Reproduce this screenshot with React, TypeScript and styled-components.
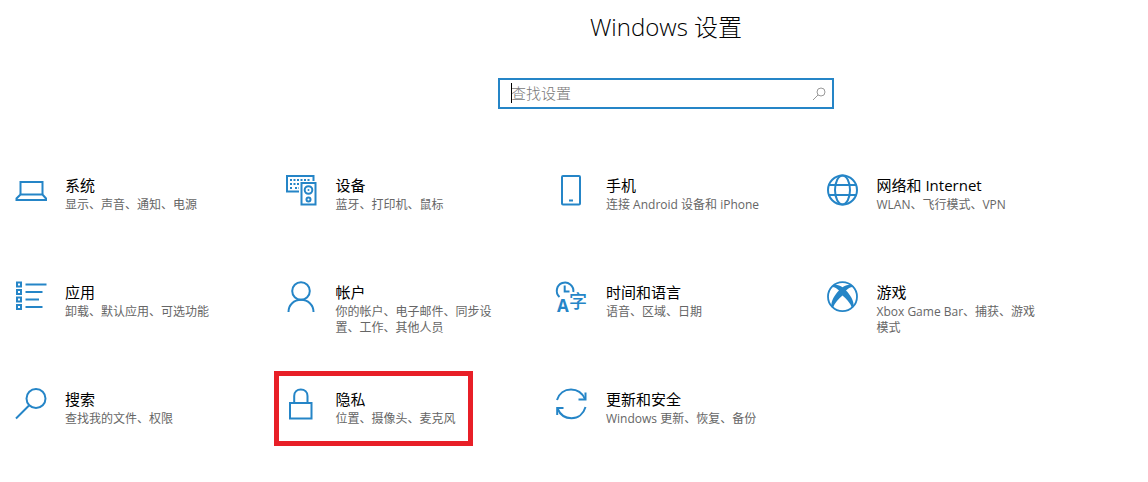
import React from "react";
import styled, { createGlobalStyle, css } from "styled-components";

const ACCENT = "#2585c7";

const GlobalStyle = createGlobalStyle`
  *, *::before, *::after { box-sizing: border-box; }
  body {
    margin: 0;
    background: #fff;
    color: #000;
    font-family: "Open Sans", "Noto Sans CJK SC", sans-serif;
  }
`;

const Page = styled.main`
  width: 100%;
`;

const Header = styled.header`
  display: flex;
  flex-direction: column;
  align-items: center;
  padding: 11px 0 0 184px;
`;

const PageTitle = styled.h1`
  margin: 0;
  font-size: 24px;
  line-height: 32px;
  font-weight: 300;
`;

const SearchBox = styled.label`
  position: relative;
  display: flex;
  align-items: center;
  width: 336px;
  height: 31px;
  margin-top: 35px;
  padding: 0 6px 0 11px;
  border: 2px solid ${ACCENT};
`;

const SearchInput = styled.input`
  flex: 1;
  min-width: 0;
  height: 24px;
  padding: 0 0 2px;
  border: 0;
  outline: 0;
  background: none;
  font: inherit;
  font-size: 15px;
  line-height: 22px;
  font-weight: 300;
  color: #000;
  &::placeholder { color: #777; opacity: 1; }
`;

const Caret = styled.span`
  position: absolute;
  left: 11px;
  top: 3px;
  width: 1px;
  height: 20px;
  background: #000;
`;

const Grid = styled.nav`
  display: grid;
  grid-template-columns: repeat(4, minmax(0, 1fr));
  grid-auto-rows: minmax(107px, auto);
  padding: 65px 51px 0 15px;
`;

const Tile = styled.a<{ $marked?: boolean }>`
  position: relative;
  display: flex;
  align-items: flex-start;
  gap: 18px;
  color: inherit;
  text-decoration: none;
  ${(p) =>
    p.$marked &&
    css`
      &::after {
        content: "";
        position: absolute;
        left: -12px;
        top: -17px;
        width: 199px;
        height: 75px;
        border: 5px solid #e81f27;
      }
    `}
`;

const Icon = styled.svg`
  flex: none;
  width: 32px;
  height: 32px;
  overflow: visible;
  fill: none;
  stroke: ${ACCENT};
  stroke-width: 2;
`;

const Glyph = styled.text<{ $weight: number }>`
  fill: ${ACCENT};
  stroke: none;
  font-weight: ${(p) => p.$weight};
`;

const TileText = styled.div`
  max-width: 160px;
`;

const TileTitle = styled.h2`
  margin: 0 0 1px;
  font-size: 15px;
  line-height: 22px;
  font-weight: 400;
  white-space: nowrap;
`;

const TileDescription = styled.p`
  margin: 0;
  font-size: 12px;
  line-height: 16px;
  font-weight: 400;
  color: #666;
`;

const icons: Record<string, React.ReactNode> = {
  system: (
    <>
      <path d="M5.500 20V8H27.500V20" />
      <path d="M5.500 20.500H27.500L31 24.500V26H1.500V24.500Z" />
    </>
  ),
  devices: (
    <>
      <path d="M13 17.500H1V2H27.500V7" />
      <path d="M4 6H25M4 10H13M4 14H7M9 14H13" strokeDasharray="2 1.500" />
      <rect x="15.500" y="9" width="14" height="21.500" />
      <circle cx="22.500" cy="16" r="3.800" />
      <circle cx="22.500" cy="16" r="1" fill={ACCENT} stroke="none" />
      <circle cx="22.500" cy="25.500" r="2" />
    </>
  ),
  phone: (
    <>
      <rect x="6" y="2" width="18" height="28.500" rx="1" />
      <path d="M13 26.500H17" />
    </>
  ),
  network: (
    <>
      <circle cx="15.500" cy="16" r="14.500" />
      <ellipse cx="15.500" cy="16" rx="7.500" ry="14.500" />
      <path d="M2 11H29M2 21H29" />
    </>
  ),
  apps: (
    <>
      <path d="M2 1.500H6V5.500H2ZM2 9H6V13H2ZM2 16.500H6V20.500H2ZM2 24H6V28H2Z" />
      <path d="M10.500 3.500H31.500M10.500 11H27.500M10.500 18.500H24M10.500 26H27.500" />
    </>
  ),
  account: (
    <>
      <circle cx="15" cy="10" r="8.800" />
      <path d="M2.500 31C2.500 24 8 18.800 15 18.800S27.500 24 27.500 31" />
    </>
  ),
  time: (
    <>
      <path d="M3.500 16A8.300 8.300 0 1 1 17.300 11" />
      <path d="M8.700 4.500V10.500H13.500" />
      <Glyph $weight={700} x="1" y="31" fontSize="17">A</Glyph>
      <Glyph $weight={500} x="13" y="27" fontSize="18">字</Glyph>
    </>
  ),
  gaming: (
    <>
      <circle cx="15.500" cy="15.700" r="14.500" strokeWidth="1.800" />
      <path
        d="M5.500 4.500C8.500 2.800 12.500 4.300 15.500 6.200C18.500 4.300 22.500 2.800 25.500 4.500L26.500 6C24 5.500 21 7.500 19 9.500C23 13.500 27.500 20 26.500 26L25 27C23.500 22 19 17.500 15.500 14.500C12 17.500 7.500 22 6 27L4.500 26C3.500 20 8 13.500 12 9.500C10 7.500 7 5.500 4.500 6Z"
        fill={ACCENT}
        stroke="none"
      />
    </>
  ),
  search: (
    <>
      <circle cx="21" cy="10.500" r="9.500" />
      <path d="M14 17.500L1 30.500" />
    </>
  ),
  privacy: (
    <>
      <rect x="4" y="15" width="21.500" height="15.500" />
      <path d="M8.200 15V8C8.200 4 11 1.500 14.800 1.500S21.500 4 21.500 8V15" />
    </>
  ),
  update: (
    <>
      <path d="M1 12C3 5.500 8.500 1.500 15 1.500C21.500 1.500 26.500 5.500 29 11" />
      <path d="M29.500 4.500V11.500H22.500" />
      <path d="M29.500 19C27.500 26 22 30.200 15.500 30.200C9 30.200 4 26.500 1.500 20.500" />
      <path d="M1.200 27V20H7.500" />
    </>
  ),
};

const categories = [
  { id: "system", title: "系统", description: "显示、声音、通知、电源" },
  { id: "devices", title: "设备", description: "蓝牙、打印机、鼠标" },
  { id: "phone", title: "手机", description: "连接 Android 设备和 iPhone" },
  { id: "network", title: "网络和 Internet", description: "WLAN、飞行模式、VPN" },
  { id: "apps", title: "应用", description: "卸载、默认应用、可选功能" },
  { id: "account", title: "帐户", description: "你的帐户、电子邮件、同步设置、工作、其他人员" },
  { id: "time", title: "时间和语言", description: "语音、区域、日期" },
  { id: "gaming", title: "游戏", description: "Xbox Game Bar、捕获、游戏模式" },
  { id: "search", title: "搜索", description: "查找我的文件、权限" },
  { id: "privacy", title: "隐私", description: "位置、摄像头、麦克风", marked: true },
  { id: "update", title: "更新和安全", description: "Windows 更新、恢复、备份" },
];

const SearchGlyph = styled.svg`
  flex: none;
  width: 14px;
  height: 14px;
  fill: none;
  stroke: #999;
`;

export default function App() {
  return (
    <Page lang="zh-CN">
      <GlobalStyle />
      <Header>
        <PageTitle>Windows 设置</PageTitle>
        <SearchBox>
          <SearchInput type="text" placeholder="查找设置" aria-label="查找设置" />
          <Caret />
          <SearchGlyph viewBox="0 0 14 14" aria-hidden="true">
            <circle cx="9" cy="5" r="4" />
            <path d="M6 8L1 13" />
          </SearchGlyph>
        </SearchBox>
      </Header>
      <Grid>
        {categories.map((c) => (
          <Tile key={c.id} href={`#${c.id}`} $marked={c.marked}>
            <Icon viewBox="0 0 32 32" aria-hidden="true">{icons[c.id]}</Icon>
            <TileText>
              <TileTitle>{c.title}</TileTitle>
              <TileDescription>{c.description}</TileDescription>
            </TileText>
          </Tile>
        ))}
      </Grid>
    </Page>
  );
}
